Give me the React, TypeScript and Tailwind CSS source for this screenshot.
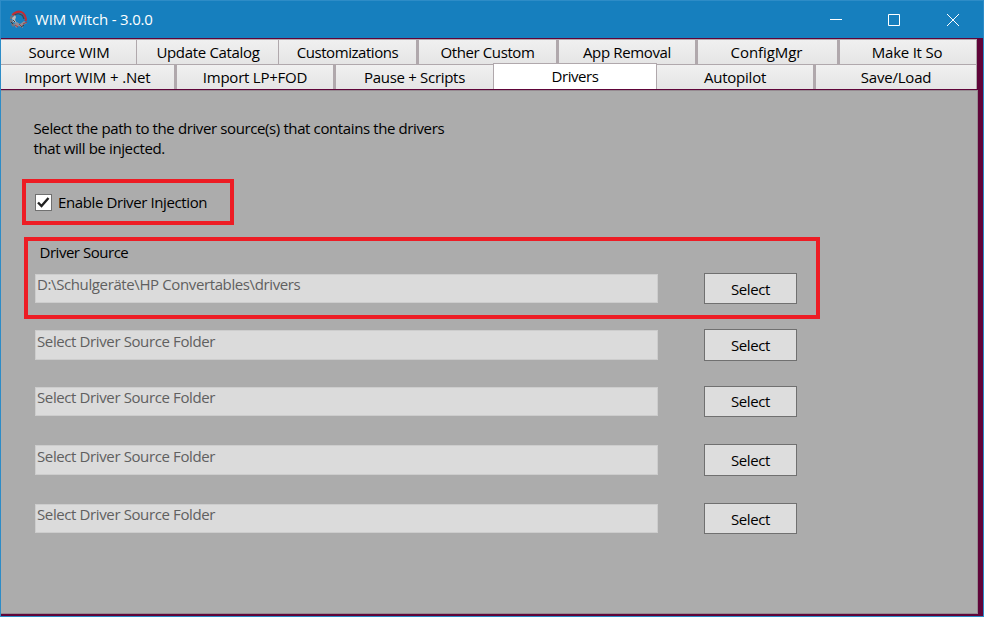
import React from 'react';

type Tab = { label: string; box: string; text: string };

const topTabs: Tab[] = [
  { label: 'Source WIM', box: 'w-[136px] border-r pl-px', text: 'tracking-[-0.26px]' },
  { label: 'Update Catalog', box: 'w-[142px] border-r pl-px', text: 'tracking-[-0.32px]' },
  { label: 'Customizations', box: 'w-[139px] border-r-2', text: 'tracking-[-0.45px]' },
  { label: 'Other Custom', box: 'w-[140px] border-r-2 border-l', text: 'tracking-[-0.4px]' },
  { label: 'App Removal', box: 'w-[139px] border-r-2 border-l', text: 'tracking-[-0.35px]' },
  { label: 'ConfigMgr', box: 'w-[142px] border-r-2 border-l pr-[2px]', text: 'tracking-[-0.06px]' },
  { label: 'Make It So', box: 'w-[138px] border-r border-l pr-[2px]', text: 'tracking-[-0.23px]' },
];

const bottomTabs: Tab[] = [
  { label: 'Import WIM + .Net', box: 'w-[175px] border-r-2', text: 'tracking-[-0.14px]' },
  { label: 'Import LP+FOD', box: 'w-[159px] border-r-2 border-l', text: 'tracking-[-0.23px]' },
  { label: 'Pause + Scripts', box: 'w-[158px] border-l', text: 'tracking-[-0.3px]' },
  { label: 'Drivers', box: 'w-[164px]', text: 'tracking-[-0.45px]' },
  { label: 'Autopilot', box: 'w-[158px] border-r-2', text: 'tracking-[-0.22px]' },
  { label: 'Save/Load', box: 'w-[162px] border-r border-l', text: 'tracking-[-0.2px]' },
];

const rows = [
  { value: 'D:\\Schulgeräte\\HP Convertables\\drivers', gap: 'mt-[10px]', height: 'h-[31px]', field: 'h-[29px] leading-[18px]', label: 'pt-px' },
  { value: 'Select Driver Source Folder', gap: 'mt-[25px]', height: 'h-[32px]', field: 'h-[30px] leading-5', label: 'pt-px' },
  { value: 'Select Driver Source Folder', gap: 'mt-[25px]', height: 'h-[31px]', field: 'h-[29px] leading-[18px]', label: 'pb-px' },
  { value: 'Select Driver Source Folder', gap: 'mt-[27px]', height: 'h-[32px]', field: 'h-[30px] leading-5', label: 'pt-px' },
  { value: 'Select Driver Source Folder', gap: 'mt-[27px]', height: 'h-[31px]', field: 'h-[29px] leading-[18px]', label: 'pt-px' },
];

function TabButton({ tab }: { tab: Tab }) {
  const active = tab.label === 'Drivers';
  return (
    <button
      className={`${tab.box} ${tab.text} shrink-0 whitespace-nowrap border-[#b0a8ac] text-center ${
        active
          ? 'relative z-10 -mt-[2px] h-[26px] border-x border-t bg-white leading-[23px]'
          : 'h-[24px] bg-linear-to-b from-[#f0f0f0] to-[#e5e5e5] pt-px leading-[23px]'
      }`}
    >
      {tab.label}
    </button>
  );
}

function Logo() {
  return (
    <svg className="ml-[8px] h-5 w-5" viewBox="0 0 20 20" fill="none">
      <path d="M5 16C1 12 1 6 6 3" stroke="#77747c" strokeWidth="2.6" strokeDasharray="3 .7" />
      <path d="M3.5 5Q9-.5 14 3Q18 7 16.5 11" stroke="#c52b32" strokeWidth="2" />
      <path d="M5 5.5Q9 2 13.5 5.5L15 9" stroke="#40454e" strokeWidth="1.2" />
      <path d="M3 8L6 5L7 7L6 10L8 13L4 12Z" fill="#b8b8bb" />
      <path d="M5 14L8 12L11 14L15 11L18 13L14 15L14 18L10 16L7 18Z" fill="#918d95" />
      <path d="M6 15L9 17M10 14L12 16M14 14L18 12" stroke="#a63a42" />
      <path d="M2 12L4 14M4 10L6 12M12 17L15 15" stroke="#363b45" />
    </svg>
  );
}

export default function App() {
  return (
    <div className="flex h-[617px] w-[984px] flex-col overflow-hidden border border-t-0 border-[#2d8cc7] bg-[#5f0439] font-['Open_Sans','Noto_Sans',sans-serif] text-[15px] tracking-[-0.385px] text-black">
      <header className="flex h-[38px] shrink-0 items-center border-t border-[#2d8cc7] bg-[#167fbe] text-white">
        <Logo />
        <span className="ml-[6px] tracking-[-0.2px]">WIM Witch - 3.0.0</span>
        <svg className="ml-auto mr-[23px] h-4 w-[132px]" viewBox="0 0 132 16" fill="none" stroke="white">
          <path d="M2 7.5H14" />
          <path d="M60.5 2.5H71.5V13.5H60.5Z" />
          <path d="M119 2L131 14M131 2L119 14" />
        </svg>
      </header>
      <nav className="mt-px h-[50px] w-[976px] shrink-0 bg-[#b0a8ac]">
        <div className="flex pt-[1px]">
          {topTabs.map((tab) => <TabButton key={tab.label} tab={tab} />)}
        </div>
        <div className="flex pt-[1px]">
          {bottomTabs.map((tab) => <TabButton key={tab.label} tab={tab} />)}
        </div>
      </nav>
      <main className="mt-px h-[524px] w-[977px] shrink-0 border-y border-r border-[#968b91] bg-[#acacac] pl-[22px]">
        <p className="mb-[21px] ml-[10.5px] mt-[27px] w-[430px] leading-5">
          Select the path to the driver source(s) that contains the drivers
          <br />
          that will be injected.
        </p>
        <label className="-ml-[1px] flex h-[46px] w-[212px] items-center border-4 border-[#ed1c24] pl-[9px]">
          <span className="flex h-[17px] w-[17px] items-center justify-center border border-[#707070] bg-white">
            <svg className="h-[15px] w-[15px]" viewBox="0 0 15 15" fill="none">
              <path d="M2 7.5L5.5 11L12.5 3" stroke="#212121" strokeWidth="2.4" />
            </svg>
          </span>
          <span className="ml-[6px]">Enable Driver Injection</span>
        </label>
        <section className="ml-[1px] mt-[12px] h-[82px] w-[796px] border-4 border-[#ed1c24] pl-[7px]">
          <h2 className="ml-[4.5px] mt-[2px] h-[20px] leading-[18px] tracking-[-0.47px]">Driver Source</h2>
          {rows.map((row, i) => (
            <div key={i} className={`flex items-start ${row.gap}`}>
              <div className={`mt-[1px] w-[623px] border border-[#cdcdcd] bg-[#dbdbdb] pl-[1px] text-[#606060] ${row.field}`}>
                {row.value}
              </div>
              <button className={`ml-[46px] w-[93px] border border-[#707070] bg-[#dddddd] ${row.height} ${row.label}`}>
                Select
              </button>
            </div>
          ))}
        </section>
      </main>
    </div>
  );
}
